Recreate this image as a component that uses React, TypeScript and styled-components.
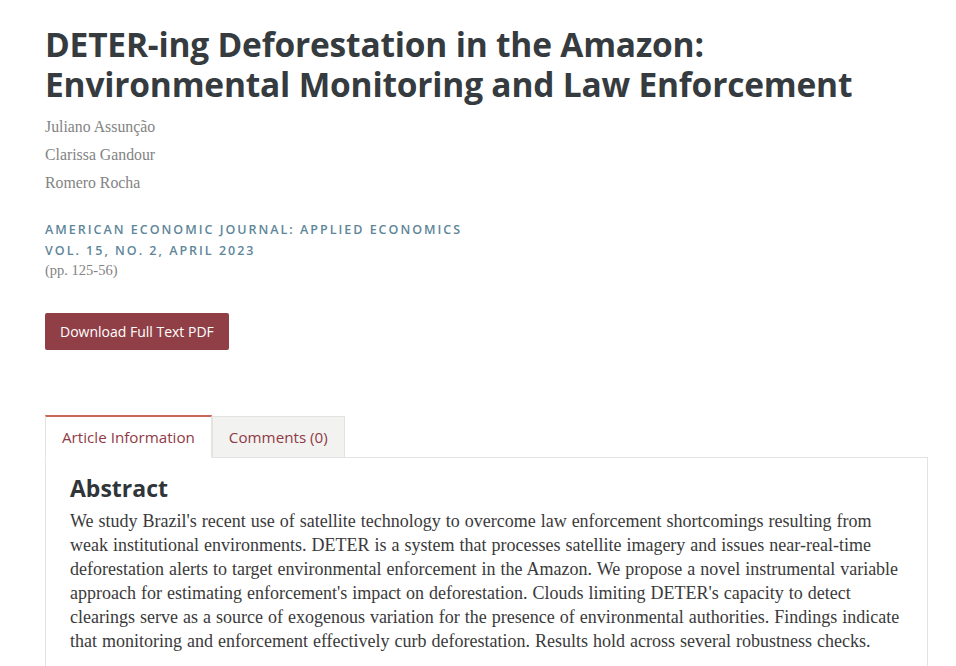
import React from "react";
import styled, { createGlobalStyle } from "styled-components";

const Global = createGlobalStyle`
  html, body { margin: 0; padding: 0; background: #fff; }
  body { font-family: "Open Sans", sans-serif; }
`;

const Page = styled.main`
  padding: 24px 28px 0 45px;
  max-width: 884px;
`;

const Title = styled.h1`
  margin: 0;
  font-family: "Open Sans", sans-serif;
  font-weight: 700;
  font-size: 33.5px;
  line-height: 40px;
  color: #353b3e;
  letter-spacing: -0.2px;
`;

const Authors = styled.ul`
  list-style: none;
  margin: 14px 0 0;
  padding: 0;
  display: flex;
  flex-direction: column;
  gap: 10px;
`;

const Author = styled.li`
  font-family: "Liberation Serif", serif;
  font-size: 15.8px;
  line-height: 18px;
  color: #838383;
`;

const Journal = styled.div`
  margin-top: 27px;
  font-family: "Open Sans", sans-serif;
  font-weight: 600;
  font-size: 12.5px;
  line-height: 21px;
  letter-spacing: 2px;
  color: #5e8699;
  text-transform: uppercase;
`;

const Pages = styled.div`
  font-family: "Liberation Serif", serif;
  font-size: 14.5px;
  line-height: 18px;
  color: #838383;
`;

const DownloadButton = styled.button`
  margin-top: 34px;
  display: inline-block;
  background: #903f47;
  color: #fff;
  border: none;
  border-radius: 2px;
  height: 37px;
  padding: 0 15px;
  font-family: "Open Sans", sans-serif;
  font-size: 14px;
  cursor: pointer;
`;

const Tabs = styled.section`
  margin-top: 65px;
`;

const TabList = styled.div`
  display: flex;
  align-items: flex-end;
`;

const Tab = styled.div<{ $active?: boolean }>`
  height: ${(p) => (p.$active ? "43px" : "42px")};
  box-sizing: border-box;
  padding: 0 16px;
  display: flex;
  align-items: center;
  font-family: "Open Sans", sans-serif;
  font-size: 15.2px;
  color: #8f3a45;
  background: ${(p) => (p.$active ? "#fff" : "#f2f2f1")};
  border: 1px solid #e3e3e3;
  border-top: ${(p) => (p.$active ? "2px solid #c9665a" : "1px solid #e3e3e3")};
  border-bottom: ${(p) => (p.$active ? "1px solid #fff" : "1px solid #e3e3e3")};
  margin-bottom: -1px;
  position: relative;
  z-index: ${(p) => (p.$active ? 1 : 0)};
`;

const Panel = styled.div`
  border: 1px solid #e3e3e3;
  padding: 14px 24px 20px;
`;

const SectionTitle = styled.h2`
  margin: 0;
  font-family: "Open Sans", sans-serif;
  font-weight: 700;
  font-size: 23px;
  line-height: 32px;
  color: #2f3538;
`;

const Abstract = styled.p`
  margin: 5px 0 0;
  font-family: "Liberation Serif", serif;
  font-size: 18px;
  line-height: 24px;
  word-spacing: 0.5px;
  color: #3a3a3a;
`;

export default function App() {
  return (
    <>
      <Global />
      <Page>
        <Title>
          DETER-ing Deforestation in the Amazon: Environmental Monitoring and Law Enforcement
        </Title>
        <Authors>
          <Author>Juliano Assunção</Author>
          <Author>Clarissa Gandour</Author>
          <Author>Romero Rocha</Author>
        </Authors>
        <Journal>
          American Economic Journal: Applied Economics
          <br />
          Vol. 15, No. 2, April 2023
        </Journal>
        <Pages>(pp. 125-56)</Pages>
        <DownloadButton>Download Full Text PDF</DownloadButton>
        <Tabs>
          <TabList>
            <Tab $active>Article Information</Tab>
            <Tab>Comments (0)</Tab>
          </TabList>
          <Panel>
            <SectionTitle>Abstract</SectionTitle>
            <Abstract>
              We study Brazil's recent use of satellite technology to overcome law enforcement
              shortcomings resulting from weak institutional environments. DETER is a system that
              processes satellite imagery and issues near-real-time deforestation alerts to target
              environmental enforcement in the Amazon. We propose a novel instrumental variable
              approach for estimating enforcement's impact on deforestation. Clouds limiting DETER's
              capacity to detect clearings serve as a source of exogenous variation for the presence
              of environmental authorities. Findings indicate that monitoring and enforcement
              effectively curb deforestation. Results hold across several robustness checks.
            </Abstract>
          </Panel>
        </Tabs>
      </Page>
    </>
  );
}
